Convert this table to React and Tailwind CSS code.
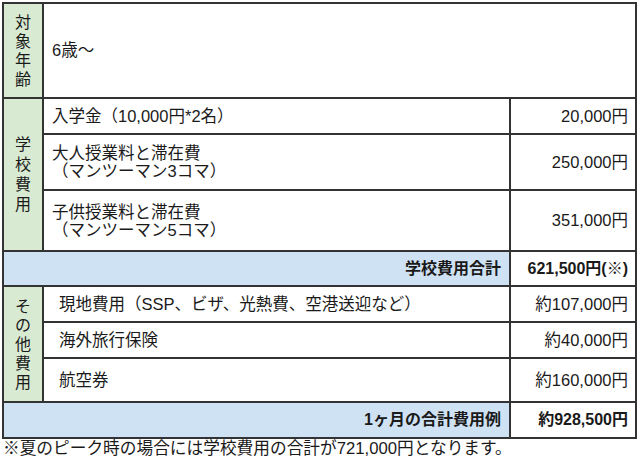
export default function App() {
  const font = { fontFamily: '"Liberation Sans", "Noto Sans CJK JP", sans-serif' };
  return (
    <div className="w-[640px] h-[461px] bg-white text-[#1a1a1a] pl-[2px] pt-[2px]" style={font}>
      <div className="grid w-[635px] bg-[#333] p-[2px] text-[16.5px]">
        <div className="grid grid-cols-[38px_465px_124px] grid-rows-[93px_34px_54px_59px_33px_34px_34px_42px_34px] gap-[2px]">
          <div className="row-start-1 col-start-1 flex flex-col items-center justify-center bg-[#d9ead3] leading-[19px] text-[16px]">
            <span>対</span><span>象</span><span>年</span><span>齢</span>
          </div>
          <div className="row-start-1 col-start-2 col-span-2 bg-white flex items-center pl-[8px]">6歳〜</div>

          <div className="row-start-2 row-span-3 col-start-1 flex flex-col items-center justify-center bg-[#d9ead3] leading-[20px] text-[16px]">
            <span>学</span><span>校</span><span>費</span><span>用</span>
          </div>
          <div className="row-start-2 col-start-2 bg-white flex items-center pl-[8px]">入学金（10,000円*2名）</div>
          <div className="row-start-2 col-start-3 bg-white flex items-center justify-end pr-[7px]">20,000円</div>

          <div className="row-start-3 col-start-2 bg-white flex flex-col justify-center pl-[8px] leading-[18px]">
            <span>大人授業料と滞在費</span>
            <span>（マンツーマン3コマ）</span>
          </div>
          <div className="row-start-3 col-start-3 bg-white flex items-center justify-end pr-[7px]">250,000円</div>

          <div className="row-start-4 col-start-2 bg-white flex flex-col justify-center pl-[8px] leading-[18px]">
            <span>子供授業料と滞在費</span>
            <span>（マンツーマン5コマ）</span>
          </div>
          <div className="row-start-4 col-start-3 bg-white flex items-center justify-end pr-[7px]">351,000円</div>

          <div className="row-start-5 col-start-1 col-span-2 bg-[#cfe2f3] flex items-center justify-end pr-[8px] font-bold text-[16px]">学校費用合計</div>
          <div className="row-start-5 col-start-3 bg-white flex items-center justify-end pr-[7px] font-bold text-[16px]">621,500円(※)</div>

          <div className="row-start-6 row-span-3 col-start-1 flex flex-col items-center justify-center bg-[#d9ead3] leading-[19px] text-[16px]">
            <span>そ</span><span>の</span><span>他</span><span>費</span><span>用</span>
          </div>
          <div className="row-start-6 col-start-2 bg-white flex items-center pl-[15px]">現地費用（SSP、ビザ、光熱費、空港送迎など）</div>
          <div className="row-start-6 col-start-3 bg-white flex items-center justify-end pr-[7px]">約107,000円</div>

          <div className="row-start-7 col-start-2 bg-white flex items-center pl-[15px]">海外旅行保険</div>
          <div className="row-start-7 col-start-3 bg-white flex items-center justify-end pr-[7px]">約40,000円</div>

          <div className="row-start-8 col-start-2 bg-white flex items-center pl-[15px]">航空券</div>
          <div className="row-start-8 col-start-3 bg-white flex items-center justify-end pr-[7px]">約160,000円</div>

          <div className="row-start-9 col-start-1 col-span-2 bg-[#cfe2f3] flex items-center justify-end pr-[8px] font-bold text-[16px]">1ヶ月の合計費用例</div>
          <div className="row-start-9 col-start-3 bg-white flex items-center justify-end pr-[7px] font-bold text-[16px]">約928,500円</div>
        </div>
      </div>
      <div className="text-[16.7px] leading-[19px] pl-px">※夏のピーク時の場合には学校費用の合計が721,000円となります。</div>
    </div>
  );
}
